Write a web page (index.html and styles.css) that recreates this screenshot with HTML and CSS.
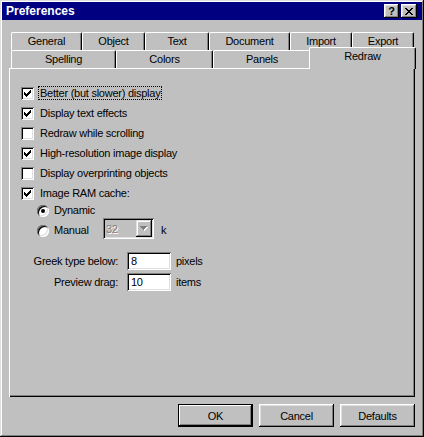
FILE: index.html
```html
<!DOCTYPE html>
<html lang="en">

<head>
    <meta charset="UTF-8">
    <title>Preferences</title>
    <link rel="stylesheet" href="styles.css">
</head>

<body>
    <div class="window">
        <div class="titlebar">
            <span class="title">Preferences</span>
            <div class="title-buttons">
                <button class="title-btn">?</button>
                <button class="title-btn">
                    <svg width="8" height="7" viewBox="0 0 8 7">
                        <path d="M0 0h2v1h-2zM6 0h2v1h-2zM1 1h2v1h-2zM5 1h2v1h-2zM2 2h4v1h-4zM3 3h2v1h-2zM2 4h4v1h-4zM1 5h2v1h-2zM5 5h2v1h-2zM0 6h2v1h-2zM6 6h2v1h-2z" fill="#000" />
                    </svg>
                </button>
            </div>
        </div>

        <div class="tabs">
            <div class="tab-row">
                <div class="tab tab-general">General</div>
                <div class="tab tab-object">Object</div>
                <div class="tab tab-text">Text</div>
                <div class="tab tab-document">Document</div>
                <div class="tab tab-import">Import</div>
                <div class="tab tab-export">Export</div>
            </div>
            <div class="tab-row">
                <div class="tab tab-spelling">Spelling</div>
                <div class="tab tab-colors">Colors</div>
                <div class="tab tab-panels">Panels</div>
                <div class="tab tab-redraw active">Redraw</div>
            </div>
        </div>

        <div class="panel">
            <div class="check-row">
                <span class="checkbox checked"></span>
                <span class="label focus">Better (but slower) display</span>
            </div>
            <div class="check-row">
                <span class="checkbox checked"></span>
                <span class="label">Display text effects</span>
            </div>
            <div class="check-row">
                <span class="checkbox"></span>
                <span class="label">Redraw while scrolling</span>
            </div>
            <div class="check-row">
                <span class="checkbox checked"></span>
                <span class="label">High-resolution image display</span>
            </div>
            <div class="check-row">
                <span class="checkbox"></span>
                <span class="label">Display overprinting objects</span>
            </div>
            <div class="check-row">
                <span class="checkbox checked"></span>
                <span class="label">Image RAM cache:</span>
            </div>

            <div class="radio-group">
                <div class="radio-row">
                    <span class="radio selected"></span>
                    <span class="label">Dynamic</span>
                </div>
                <div class="radio-row manual">
                    <span class="radio"></span>
                    <span class="label radio-label">Manual</span>
                    <div class="combo">
                        <span class="combo-value">32</span>
                        <span class="combo-button">
                            <svg width="8" height="5" viewBox="0 0 8 5">
                                <path d="M1 1h7v1h-1v1h-1v1h-1v1h-1v-1h-1v-1h-1v-1h-1z" fill="#fff" />
                                <path d="M0 0h7v1h-1v1h-1v1h-1v1h-1v-1h-1v-1h-1v-1h-1z" fill="#808080" />
                            </svg>
                        </span>
                    </div>
                    <span class="label unit-k">k</span>
                </div>
            </div>

            <div class="fields">
                <span class="field-label">Greek type below:</span>
                <span class="input">8</span>
                <span class="field-unit">pixels</span>
                <span class="field-label">Preview drag:</span>
                <span class="input">10</span>
                <span class="field-unit">items</span>
            </div>
        </div>

        <div class="buttons">
            <button class="btn default">OK</button>
            <button class="btn">Cancel</button>
            <button class="btn">Defaults</button>
        </div>
    </div>
</body>

</html>
```

FILE: styles.css
```css
/* Reset and base styles */
* {
    box-sizing: border-box;
    margin: 0;
    padding: 0;
}

body {
    font-family: "Liberation Sans", Arial, sans-serif;
    font-size: 11px;
    letter-spacing: -0.25px;
    color: #000;
    background: #c0c0c0;
}

button {
    font: inherit;
    letter-spacing: inherit;
    color: inherit;
    border: none;
    background: #c0c0c0;
}

/* Window frame */
.window {
    width: 424px;
    height: 437px;
    padding: 2px;
    background: #c0c0c0;
    box-shadow: inset -1px -1px #000, inset 1px 1px #dfdfdf,
        inset -2px -2px #808080, inset 2px 2px #fff;
}

/* Title bar */
.titlebar {
    height: 18px;
    background: #000080;
    display: flex;
    align-items: center;
    justify-content: space-between;
    padding: 0 5px 0 4px;
}

.title {
    color: #fff;
    font-weight: bold;
    font-size: 12px;
    letter-spacing: 0;
}

.title-buttons {
    display: flex;
    gap: 2px;
}

.title-btn {
    width: 15px;
    height: 14px;
    display: flex;
    align-items: center;
    justify-content: center;
    font-weight: bold;
    font-size: 11px;
    line-height: 1;
    padding-top: 1px;
    box-shadow: inset -1px -1px #000, inset 1px 1px #fff,
        inset -2px -2px #808080, inset 2px 2px #dfdfdf;
}

.title-btn:last-child {
    width: 16px;
}

/* Tabs */
.tabs {
    margin: 12px 7px 0;
    padding-left: 2px;
}

.tab-row {
    display: flex;
    align-items: flex-start;
    height: 18px;
}

.tab {
    height: 18px;
    flex: none;
    display: flex;
    justify-content: center;
    padding-top: 2px;
    line-height: 13px;
    background: #c0c0c0;
    border-top: 1px solid #fff;
    border-left: 1px solid #fff;
    border-right: 1px solid #000;
    border-top-left-radius: 2px;
    border-top-right-radius: 2px;
    box-shadow: inset -1px 0 #808080;
}

.tab-general { width: 71px; }
.tab-object { width: 63px; }
.tab-text { width: 64px; }
.tab-document { width: 81px; }
.tab-import { width: 62px; }
.tab-export { width: 62px; }
.tab-spelling { width: 105px; }
.tab-colors { width: 97px; }
.tab-panels { width: 98px; }
.tab-redraw { width: 103px; }

.tab.active {
    position: relative;
    z-index: 1;
    width: 107px;
    height: 22px;
    margin: -3px -2px -1px;
    padding-top: 2px;
}

/* Panel */
.panel {
    height: 329px;
    margin: 0 7px;
    padding: 15px 12px 0;
    box-shadow: inset 1px 1px #fff, inset -1px -1px #000, inset -2px -2px #808080;
}

.label {
    height: 14px;
    line-height: 12px;
    padding: 0 1px;
    border: 1px solid transparent;
    white-space: nowrap;
}

.label.focus {
    border: 1px dotted #000;
}

/* Checkboxes */
.check-row {
    display: flex;
    height: 20px;
    gap: 4px;
}

.checkbox {
    width: 13px;
    height: 13px;
    margin-top: 4px;
    background: #fff;
    box-shadow: inset 1px 1px #808080, inset -1px -1px #fff,
        inset 2px 2px #000, inset -2px -2px #dfdfdf;
}

.checkbox.checked {
    background: #fff url("data:image/svg+xml,%3Csvg xmlns='http://www.w3.org/2000/svg' width='13' height='13'%3E%3Cpath d='M9 3h1v3h-1zM8 4h1v3h-1zM7 5h1v3h-1zM6 6h1v3h-1zM5 7h1v3h-1zM4 6h1v3h-1zM3 5h1v3h-1z' fill='%23000'/%3E%3C/svg%3E") no-repeat;
}

.check-row .label {
    margin-top: 3px;
}

/* Radios */
.radio-group {
    margin: -3px 0 0 16px;
}

.radio-row {
    display: flex;
    height: 20px;
    gap: 3px;
}

.radio-row.manual {
    height: 22px;
}

.radio {
    position: relative;
    width: 12px;
    height: 12px;
    margin-top: 5px;
    border-radius: 50%;
    background: #fff;
    box-shadow: inset 1px 1px #808080, inset -1px -1px #fff,
        inset 2px 2px #000, inset -2px -2px #dfdfdf;
}

.radio.selected::after {
    content: "";
    position: absolute;
    left: 4px;
    top: 4px;
    width: 4px;
    height: 4px;
    border-radius: 50%;
    background: #000;
}

.radio-row .label {
    margin-top: 3px;
}

.radio-label {
    width: 48px;
}

.combo {
    width: 51px;
    height: 21px;
    margin-top: -2px;
    display: flex;
    align-items: center;
    justify-content: space-between;
    padding: 2px;
    box-shadow: inset 1px 1px #808080, inset -1px -1px #fff,
        inset 2px 2px #000, inset -2px -2px #dfdfdf;
}

.combo-value {
    padding-left: 1px;
    color: #808080;
    text-shadow: 1px 1px #fff;
}

.combo-button {
    width: 16px;
    height: 17px;
    display: flex;
    align-items: center;
    justify-content: center;
    box-shadow: inset -1px -1px #000, inset 1px 1px #dfdfdf,
        inset -2px -2px #808080, inset 2px 2px #fff;
}

.unit-k {
    margin-left: 2px;
}

/* Numeric fields */
.fields {
    display: grid;
    grid-template-columns: 97px 44px auto;
    grid-auto-rows: 21px;
    column-gap: 9px;
    align-items: start;
    margin-top: 10px;
}

.field-label {
    text-align: right;
    line-height: 18px;
}

.field-unit {
    line-height: 18px;
    margin-left: -4px;
}

.input {
    height: 18px;
    line-height: 18px;
    padding-left: 4px;
    background: #fff;
    box-shadow: inset 1px 1px #808080, inset -1px -1px #fff,
        inset 2px 2px #000, inset -2px -2px #dfdfdf;
}

/* Dialog buttons */
.buttons {
    display: flex;
    justify-content: flex-end;
    gap: 6px;
    margin: 7px 7px 0 0;
}

.btn {
    width: 75px;
    height: 23px;
    box-shadow: inset -1px -1px #000, inset 1px 1px #fff,
        inset -2px -2px #808080, inset 2px 2px #dfdfdf;
}

.btn.default {
    border: 1px solid #000;
    box-shadow: inset -1px -1px #000, inset 1px 1px #fff,
        inset -2px -2px #808080;
}
```
